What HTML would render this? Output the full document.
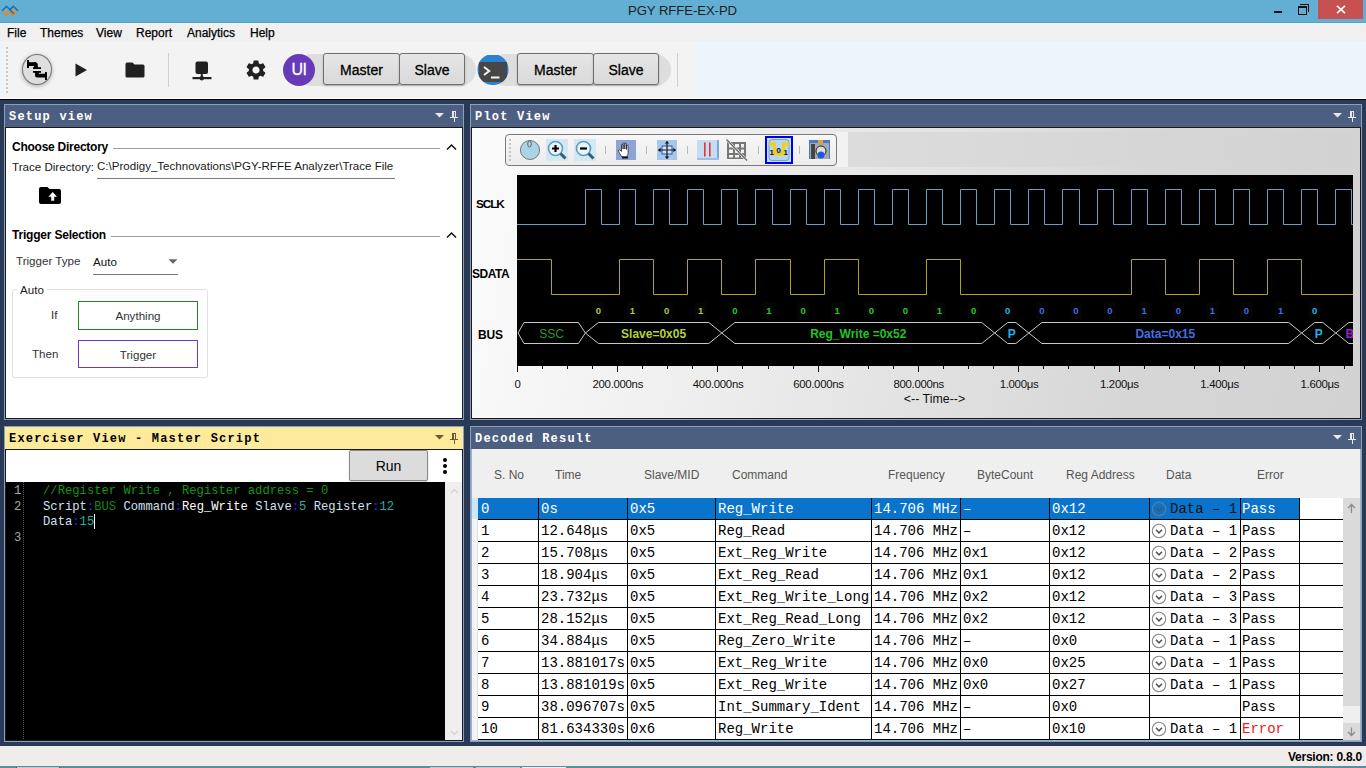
<!DOCTYPE html>
<html><head><meta charset="utf-8">
<style>
*{box-sizing:border-box;margin:0;padding:0}
html,body{width:1366px;height:768px;overflow:hidden;background:#293a57;font-family:"Liberation Sans",sans-serif;position:relative}
.a{position:absolute}
.mono{font-family:"Liberation Mono",monospace}
#title{left:0;top:0;width:1366px;height:23px;background:#62afd3;border-bottom:1px solid #5aa3c6}
#menu{left:0;top:23px;width:1366px;height:18px;background:#f0f0f0;font-size:12px;color:#000;-webkit-text-stroke:0.25px #000}
#menu span{position:absolute;top:3px}
#tb{left:0;top:41px;width:1366px;height:57px;background:#eef4fb}
#tbl{left:3px;top:41px;width:694px;height:57px;background:#f3f3f3}
#frame{left:0;top:98px;width:1366px;height:648px;background:#293a57;border-top:1px solid #fff}
.blk{left:0;top:99px;width:1366px;height:1px;background:#000}
.pn{position:absolute;border:1px solid #8e9ec0;background:#4d5f80}
.ph{position:absolute;left:0;top:0;right:0;height:22px;font:bold 12px "Liberation Mono",monospace;letter-spacing:1.2px;color:#fff;padding:5px 0 0 4px}
.pc{position:absolute;left:0;top:22px;right:0;bottom:0;border:1px solid #1a1a1a;background:#fff}
#status{left:0;top:746px;width:1366px;height:20px;background:#f0ecea}
.btn{border:1.5px solid #707070;border-radius:3px;background:linear-gradient(#e6e6e6,#d9d9d9);font-size:14px;color:#000;-webkit-text-stroke:0.3px #000;text-align:center;line-height:33px;box-shadow:0 1px 2px rgba(0,0,0,.25)}
.hd{font-size:12px;color:#555}
.cell{font:14px/18px "Liberation Mono",monospace;white-space:pre}
.code{font:12.2px/15px "Liberation Mono",monospace;white-space:pre}
#taskb{left:0;top:766px;width:1366px;height:2px;background:#5a8e9c}
</style></head><body>
<div id="title" class="a"></div>
<svg class="a" style="left:0;top:0" width="22" height="22" viewBox="0 0 22 22"><g fill="none" stroke-width="1.5" stroke-linecap="square"><path d="M2.6 11.2L6.5 15.1L13.4 8.2" stroke="#f5820f"/><path d="M10 12L13.3 15.1L17.4 11.2" stroke="#f5820f"/><path d="M2.6 10.2L6.5 6.3L13.4 13.2" stroke="#0a6fd8"/><path d="M10 9.6L13.3 6.3L17.4 10.2" stroke="#0a6fd8"/></g><path d="M5.5 10.5L6.5 9.3L7.5 10.5M12.3 10.5L13.3 9.3L14.3 10.5" fill="none" stroke="#f5900f" stroke-width="1.2"/></svg>
<div class="a" style="left:628px;top:3px;font-size:13.2px;color:#1e1e1e;letter-spacing:-0.1px">PGY RFFE-EX-PD</div>
<div class="a" style="left:1274px;top:11px;width:8px;height:2px;background:#111"></div>
<div class="a" style="left:1300px;top:4px;width:9px;height:8px;border-top:1.5px solid #111;border-right:1.5px solid #111"></div>
<div class="a" style="left:1298px;top:6px;width:9px;height:8.5px;border:1.5px solid #111;border-top-width:2px;background:#62afd3"></div>
<div class="a" style="left:1318px;top:0;width:45px;height:19px;background:#c75050"></div>
<svg class="a" style="left:1336px;top:5px" width="10" height="9" viewBox="0 0 10 9"><path d="M1 0.8L9 8.2M9 0.8L1 8.2" stroke="#fff" stroke-width="1.6"/></svg>
<div id="menu" class="a"><span style="left:7px">File</span><span style="left:40px">Themes</span><span style="left:96px">View</span><span style="left:136px">Report</span><span style="left:187px">Analytics</span><span style="left:250px">Help</span></div>
<div id="tb" class="a"></div>
<div id="tbl" class="a"></div>
<div class="a" style="left:6px;top:47px;width:2px;height:48px;background:repeating-linear-gradient(#c8c8c8 0 2px,transparent 2px 4px)"></div>
<!-- circle swap icon -->
<div class="a" style="left:22px;top:54px;width:30px;height:31px;border-radius:50%;background:#dedede;border:1.3px solid #747474;box-shadow:0 1px 4px rgba(0,0,0,.3)"></div>
<svg class="a" style="left:18px;top:50px" width="40" height="40" viewBox="0 0 40 40"><g fill="#000"><rect x="9" y="10" width="2" height="8"/><rect x="9" y="12.2" width="9" height="3.8"/><path d="M16 12.2h1.5a2.5 2.5 0 0 1 2.3 2.3V18h-3.8z"/><rect x="15" y="17.2" width="8" height="1.8"/><rect x="15" y="21" width="8" height="1.8"/><path d="M17 22h3.8v1.7h8v3.8H19.5a2.5 2.5 0 0 1-2.5-2.5z"/><rect x="27" y="22" width="1.9" height="8"/></g></svg>
<svg class="a" style="left:75px;top:63px" width="13" height="14" viewBox="0 0 13 14"><path d="M0.5 0.5L12 7L0.5 13.5Z" fill="#202020"/></svg>
<svg class="a" style="left:125px;top:62px" width="20" height="16" viewBox="0 0 20 16"><path d="M2 0.5h5.5l2 2H18a1.5 1.5 0 0 1 1.5 1.5v10a1.5 1.5 0 0 1-1.5 1.5H2A1.5 1.5 0 0 1 .5 14V2A1.5 1.5 0 0 1 2 .5z" fill="#202020"/></svg>
<div class="a" style="left:168px;top:53px;width:1px;height:34px;background:#cfcfcf"></div>
<svg class="a" style="left:192px;top:61px" width="20" height="20" viewBox="0 0 20 20"><rect x="3.5" y="0.5" width="12.5" height="12.5" rx="2" fill="#202020"/><rect x="8.8" y="12" width="2" height="5" fill="#202020"/><rect x="0.5" y="16" width="19" height="2.2" fill="#202020"/><circle cx="9.8" cy="17.2" r="2.2" fill="#202020"/></svg>
<svg class="a" style="left:244px;top:58px" width="24" height="24" viewBox="0 0 24 24"><path fill="#202020" d="M19.14 12.94c.04-.3.06-.61.06-.94 0-.32-.02-.64-.07-.94l2.03-1.58a.49.49 0 0 0 .12-.61l-1.92-3.32a.49.49 0 0 0-.59-.22l-2.39.96c-.5-.38-1.03-.7-1.62-.94l-.36-2.54a.48.48 0 0 0-.48-.41h-3.84c-.24 0-.43.17-.47.41l-.36 2.54c-.59.24-1.13.57-1.62.94l-2.39-.96a.48.48 0 0 0-.59.22L2.74 8.87c-.12.21-.08.47.12.61l2.03 1.58c-.05.3-.09.63-.09.94s.02.64.07.94l-2.03 1.58a.49.49 0 0 0-.12.61l1.92 3.32c.12.22.37.29.59.22l2.39-.96c.5.38 1.03.7 1.62.94l.36 2.54c.05.24.24.41.48.41h3.84c.24 0 .44-.17.47-.41l.36-2.54c.59-.24 1.13-.56 1.62-.94l2.39.96c.22.08.47 0 .59-.22l1.92-3.32c.12-.22.07-.47-.12-.61l-2.01-1.58zM12 15.6c-1.98 0-3.6-1.62-3.6-3.6s1.62-3.6 3.6-3.6 3.6 1.62 3.6 3.6-1.62 3.6-3.6 3.6z"/></svg>
<!-- toggle 1 -->
<div class="a" style="left:295px;top:54px;width:181px;height:32px;border-radius:16px;background:#dedede"></div>
<div class="a" style="left:283px;top:54px;width:32px;height:32px;border-radius:50%;background:#673ab7;color:#fff;font:16px 'Liberation Sans',sans-serif;-webkit-text-stroke:0.3px #fff;text-align:center;line-height:32px;letter-spacing:-0.5px">UI</div>
<div class="a btn" style="left:323px;top:53px;width:77px;height:32px">Master</div>
<div class="a btn" style="left:399px;top:53px;width:66px;height:32px">Slave</div>
<!-- toggle 2 -->
<div class="a" style="left:490px;top:54px;width:181px;height:32px;border-radius:16px;background:#dedede"></div>
<svg class="a" style="left:477px;top:55px" width="32" height="30" viewBox="0 0 32 30"><defs><clipPath id="cc"><circle cx="16" cy="14.5" r="15.5"/></clipPath></defs><g clip-path="url(#cc)"><rect width="32" height="30" fill="#2d7fd2"/><rect x="2" y="7" width="28" height="20" fill="#474747"/><path d="M7 12l5.2 4-5.2 4" fill="none" stroke="#f4f4f4" stroke-width="2"/><rect x="14" y="21.5" width="8.5" height="2" fill="#f4f4f4"/></g></svg>
<div class="a btn" style="left:517px;top:53px;width:77px;height:32px">Master</div>
<div class="a btn" style="left:593px;top:53px;width:66px;height:32px">Slave</div>
<div class="a" style="left:677px;top:53px;width:1px;height:34px;background:#cfcfcf"></div>
<div id="frame" class="a"></div>
<div class="a blk"></div>

<!-- Setup view -->
<div class="pn" style="left:4px;top:104px;width:460px;height:316px">
  <div class="ph">Setup view</div>
  <div class="pc"></div>
</div>
<div class="a" style="left:12px;top:140px;font-weight:bold;font-size:12px;letter-spacing:-0.25px;color:#000">Choose Directory</div>
<div class="a" style="left:113px;top:148px;width:327px;height:1px;background:#a0a0a0"></div>
<svg class="a" style="left:446px;top:143px" width="11" height="8" viewBox="0 0 11 8"><path d="M1 6.5L5.5 2 10 6.5" fill="none" stroke="#111" stroke-width="1.5"/></svg>
<div class="a" style="left:12px;top:160px;font-size:11.6px;color:#1a1a1a">Trace Directory:</div>
<div class="a" style="left:97px;top:160px;font-size:11.55px;color:#1a1a1a;letter-spacing:0px">C:\Prodigy_Technovations\PGY-RFFE Analyzer\Trace File</div>
<div class="a" style="left:97px;top:178px;width:298px;height:1px;background:#7a7a7a"></div>
<svg class="a" style="left:39px;top:187px" width="22" height="17" viewBox="0 0 22 17"><path d="M2 0h6.5l2 2H20a2 2 0 0 1 2 2v11a2 2 0 0 1-2 2H2a2 2 0 0 1-2-2V2a2 2 0 0 1 2-2z" fill="#000"/><path d="M13.7 5L18 9.8h-2.8v4H12.2v-4H9.4z" fill="#fff"/></svg>
<div class="a" style="left:12px;top:228px;font-weight:bold;font-size:12px;letter-spacing:-0.2px;color:#000">Trigger Selection</div>
<div class="a" style="left:111px;top:236px;width:329px;height:1px;background:#a0a0a0"></div>
<svg class="a" style="left:446px;top:231px" width="11" height="8" viewBox="0 0 11 8"><path d="M1 6.5L5.5 2 10 6.5" fill="none" stroke="#111" stroke-width="1.5"/></svg>
<div class="a" style="left:16px;top:254px;font-size:11.6px;color:#333">Trigger Type</div>
<div class="a" style="left:93px;top:255px;font-size:11.6px;color:#111">Auto</div>
<svg class="a" style="left:168px;top:259px" width="10" height="5" viewBox="0 0 10 5"><path d="M0.5 0.3h9L5 4.8z" fill="#666"/></svg>
<div class="a" style="left:93px;top:274px;width:85px;height:1px;background:#777"></div>
<div class="a" style="left:12px;top:289px;width:196px;height:89px;border:1px solid #e1e1e1;border-radius:3px"></div>
<div class="a" style="left:17px;top:283px;background:#fff;padding:0 3px;font-size:11.6px;color:#222">Auto</div>
<div class="a" style="left:51px;top:308px;font-size:11.6px;color:#333">If</div>
<div class="a" style="left:78px;top:301px;width:120px;height:29px;border:1.5px solid #1f8a1f;font-size:11.6px;color:#333;text-align:center;line-height:27px">Anything</div>
<div class="a" style="left:32px;top:347px;font-size:11.6px;color:#333">Then</div>
<div class="a" style="left:78px;top:340px;width:120px;height:28px;border:1.5px solid #6e3bc4;font-size:11.6px;color:#333;text-align:center;line-height:27px">Trigger</div>
<!-- Plot view -->
<div class="pn" style="left:470px;top:104px;width:892px;height:316px">
  <div class="ph">Plot View</div>
  <div class="pc" style="background:linear-gradient(100deg,#fbfbfb 0%,#f0f0f0 25%,#d6d6d6 75%,#d2d2d2 100%)"></div>
</div>
<div class="a" style="left:848px;top:132px;width:504px;height:35px;background:linear-gradient(90deg,#dcdcdc,#d2d2d2)"></div>
<div class="a" style="left:836px;top:132px;width:12px;height:35px;background:#f2f2f2"></div>
<div class="a" style="left:505px;top:134px;width:332px;height:32px;border:1px solid #7a7a7a;border-radius:4px;background:linear-gradient(#f7f7f7,#ececec)"></div>
<div class="a" style="left:509px;top:139px;width:2px;height:22px;background:repeating-linear-gradient(#c4c4c4 0 2px,transparent 2px 4px)"></div>
<svg class="a" style="left:519px;top:139px" width="22" height="22" viewBox="0 0 22 22"><ellipse cx="11" cy="11" rx="9.6" ry="9.5" fill="#a9d4e6" stroke="#777" stroke-width="1"/><ellipse cx="10.5" cy="5" rx="1.8" ry="3.2" fill="none" stroke="#666" stroke-width="1"/></svg>
<svg class="a" style="left:546px;top:139px" width="22" height="22" viewBox="0 0 22 22"><rect width="22" height="22" fill="#d4e8f2"/><circle cx="9.5" cy="9.5" r="7" fill="#eaf4fa" stroke="#5a9cc4" stroke-width="1.6"/><path d="M14.5 14.5l5 5" stroke="#2f5f7a" stroke-width="3"/><path d="M9.5 6v7M6 9.5h7" stroke="#000" stroke-width="2.2"/></svg>
<svg class="a" style="left:574px;top:139px" width="22" height="22" viewBox="0 0 22 22"><rect width="22" height="22" fill="#d4e8f2"/><circle cx="9.5" cy="9.5" r="7" fill="#eaf4fa" stroke="#5a9cc4" stroke-width="1.6"/><path d="M14.5 14.5l5 5" stroke="#2f5f7a" stroke-width="3"/><path d="M6 9.5h7" stroke="#000" stroke-width="2.2"/></svg>
<div class="a" style="left:605px;top:146px;width:1px;height:8px;background:#b8b8b8"></div>
<svg class="a" style="left:616px;top:140px" width="20" height="20" viewBox="0 0 20 20"><rect width="20" height="20" fill="#8ea4d6"/><path d="M6 17c-2-3-4-6-3.5-7 .6-1 2 .5 3 1.5V5c0-1 1.6-1 1.6 0v4V3.5c0-1 1.7-1 1.7 0V9V4c0-1 1.7-1 1.7 0v5.5V6c0-1 1.6-1 1.6 0v7c0 2-1 3-2 4z" fill="#fff" stroke="#222" stroke-width="0.8"/><rect x="6" y="16.5" width="6" height="2" fill="#111"/></svg>
<div class="a" style="left:646px;top:146px;width:1px;height:8px;background:#b8b8b8"></div>
<svg class="a" style="left:657px;top:140px" width="20" height="20" viewBox="0 0 20 20"><rect width="20" height="20" fill="#a6c6ee"/><rect x="5" y="6" width="10" height="8" fill="#cfe2fa" stroke="#2a5aa0" stroke-width="1"/><path d="M10 1.5v17M1.5 10h17" stroke="#1a1a1a" stroke-width="1.2"/><path d="M10 1l-2.2 2.6h4.4zM10 19l-2.2-2.6h4.4zM1 10l2.6-2.2v4.4zM19 10l-2.6-2.2v4.4z" fill="#111"/></svg>
<div class="a" style="left:687px;top:146px;width:1px;height:8px;background:#b8b8b8"></div>
<svg class="a" style="left:697px;top:140px" width="22" height="20" viewBox="0 0 22 20"><rect width="22" height="20" fill="#c6dcf0"/><rect x="20" y="0" width="2" height="20" fill="#7aa8d8"/><rect x="0" y="18" width="22" height="2" fill="#9cbfe2"/><rect x="7" y="2.5" width="1.6" height="14" fill="#e03838"/><rect x="12" y="2.5" width="1.6" height="14" fill="#e03838"/></svg>
<svg class="a" style="left:726px;top:139px" width="22" height="22" viewBox="0 0 22 22"><g fill="#777"><rect x="1" y="3" width="19" height="17"/></g><g fill="#f2f2f2"><rect x="3" y="5" width="4" height="3.5"/><rect x="9" y="5" width="4" height="3.5"/><rect x="15" y="5" width="3" height="3.5"/><rect x="3" y="10.5" width="4" height="3.5"/><rect x="9" y="10.5" width="4" height="3.5"/><rect x="15" y="10.5" width="3" height="3.5"/><rect x="3" y="16" width="4" height="2.5"/><rect x="9" y="16" width="4" height="2.5"/><rect x="15" y="16" width="3" height="2.5"/></g><path d="M0.5 0.5L21 21.5" stroke="#f2f2f2" stroke-width="2.4"/><path d="M0.5 0.5L21 21.5" stroke="#666" stroke-width="1.2"/></svg>
<div class="a" style="left:758px;top:146px;width:1px;height:8px;background:#b8b8b8"></div>
<svg class="a" style="left:765px;top:136px" width="28" height="28" viewBox="0 0 28 28"><rect x="1" y="1" width="26" height="26" fill="#c4e0f6" stroke="#0000f0" stroke-width="2"/><rect x="4" y="3.5" width="20" height="21" rx="3" fill="#b6d6f2" stroke="#6890c0" stroke-width="0.8"/><path d="M4 8h5.5v10h9V8H24" fill="none" stroke="#f8d000" stroke-width="2.8"/><text x="4.5" y="19" font-family="Liberation Sans" font-weight="bold" font-size="8" fill="#111">1</text><text x="11.5" y="17" font-family="Liberation Sans" font-weight="bold" font-size="8" fill="#111">0</text><text x="18.5" y="19" font-family="Liberation Sans" font-weight="bold" font-size="8" fill="#111">1</text></svg>
<div class="a" style="left:799px;top:146px;width:1px;height:8px;background:#b8b8b8"></div>
<svg class="a" style="left:809px;top:140px" width="21" height="19" viewBox="0 0 21 19"><rect width="21" height="19" fill="#4a7ad0"/><rect x="1" y="3" width="19" height="16" fill="#a8a8a8"/><rect x="2" y="4" width="4" height="15" fill="#444"/><rect x="9" y="0" width="5" height="3" fill="#f0a020"/><circle cx="12" cy="11" r="5" fill="#ddd" stroke="#222" stroke-width="1"/><circle cx="12" cy="15" r="3.5" fill="#1a5ae0"/></svg>

<div class="a" style="left:476px;top:197px;font-weight:bold;font-size:11.8px;color:#000;letter-spacing:-1.1px">SCLK</div>
<div class="a" style="left:472px;top:267px;font-weight:bold;font-size:12px;color:#000;letter-spacing:-0.5px">SDATA</div>
<div class="a" style="left:478px;top:328px;font-weight:bold;font-size:12px;color:#000;letter-spacing:-0.2px">BUS</div>
<svg class="a" style="left:0;top:0" width="1366" height="420" viewBox="0 0 1366 420">
<rect x="517" y="175" width="836" height="191" fill="#000"/>
<path d="M517 224.5 H585.5 V189.5 H601.5 V224.5 H619.5 V189.5 H635.5 V224.5 H653.5 V189.5 H669.5 V224.5 H687.5 V189.5 H703.5 V224.5 H721.5 V189.5 H737.5 V224.5 H755.5 V189.5 H772.5 V224.5 H790.5 V189.5 H806.5 V224.5 H824.5 V189.5 H840.5 V224.5 H858.5 V189.5 H874.5 V224.5 H892.5 V189.5 H908.5 V224.5 H926.5 V189.5 H942.5 V224.5 H960.5 V189.5 H976.5 V224.5 H994.5 V189.5 H1010.5 V224.5 H1028.5 V189.5 H1044.5 V224.5 H1062.5 V189.5 H1079.5 V224.5 H1097.5 V189.5 H1113.5 V224.5 H1131.5 V189.5 H1147.5 V224.5 H1165.5 V189.5 H1181.5 V224.5 H1199.5 V189.5 H1215.5 V224.5 H1233.5 V189.5 H1249.5 V224.5 H1267.5 V189.5 H1283.5 V224.5 H1301.5 V189.5 H1317.5 V224.5 H1335.5 V189.5 H1351.5 V224.5 H1353" fill="none" stroke="#64a2c2" stroke-width="1"/>
<path d="M517 259.5 H551.5 V294.5 H619.5 V259.5 H653.5 V294.5 H687.5 V259.5 H721.5 V294.5 H755.5 V259.5 H790.5 V294.5 H824.5 V259.5 H858.5 V294.5 H926.5 V259.5 H960.5 V294.5 H1131.5 V259.5 H1165.5 V294.5 H1199.5 V259.5 H1233.5 V294.5 H1267.5 V259.5 H1301.5 V294.5 H1353" fill="none" stroke="#b0a224" stroke-width="1"/>
<rect x="592.4" y="302" width="12" height="17" fill="#050505"/>
<text x="598.4" y="314" fill="#a8cc34" font-family="Liberation Sans" font-weight="bold" font-size="9.5" text-anchor="middle">0</text>
<rect x="626.5" y="302" width="12" height="17" fill="#050505"/>
<text x="632.5" y="314" fill="#a8cc34" font-family="Liberation Sans" font-weight="bold" font-size="9.5" text-anchor="middle">1</text>
<rect x="660.6" y="302" width="12" height="17" fill="#050505"/>
<text x="666.6" y="314" fill="#a8cc34" font-family="Liberation Sans" font-weight="bold" font-size="9.5" text-anchor="middle">0</text>
<rect x="694.7" y="302" width="12" height="17" fill="#050505"/>
<text x="700.7" y="314" fill="#a8cc34" font-family="Liberation Sans" font-weight="bold" font-size="9.5" text-anchor="middle">1</text>
<rect x="728.8" y="302" width="12" height="17" fill="#050505"/>
<text x="734.8" y="314" fill="#28c828" font-family="Liberation Sans" font-weight="bold" font-size="9.5" text-anchor="middle">0</text>
<rect x="763.0" y="302" width="12" height="17" fill="#050505"/>
<text x="769.0" y="314" fill="#28c828" font-family="Liberation Sans" font-weight="bold" font-size="9.5" text-anchor="middle">1</text>
<rect x="797.1" y="302" width="12" height="17" fill="#050505"/>
<text x="803.1" y="314" fill="#28c828" font-family="Liberation Sans" font-weight="bold" font-size="9.5" text-anchor="middle">0</text>
<rect x="831.2" y="302" width="12" height="17" fill="#050505"/>
<text x="837.2" y="314" fill="#28c828" font-family="Liberation Sans" font-weight="bold" font-size="9.5" text-anchor="middle">1</text>
<rect x="865.3" y="302" width="12" height="17" fill="#050505"/>
<text x="871.3" y="314" fill="#28c828" font-family="Liberation Sans" font-weight="bold" font-size="9.5" text-anchor="middle">0</text>
<rect x="899.4" y="302" width="12" height="17" fill="#050505"/>
<text x="905.4" y="314" fill="#28c828" font-family="Liberation Sans" font-weight="bold" font-size="9.5" text-anchor="middle">0</text>
<rect x="933.5" y="302" width="12" height="17" fill="#050505"/>
<text x="939.5" y="314" fill="#28c828" font-family="Liberation Sans" font-weight="bold" font-size="9.5" text-anchor="middle">1</text>
<rect x="967.6" y="302" width="12" height="17" fill="#050505"/>
<text x="973.6" y="314" fill="#28c828" font-family="Liberation Sans" font-weight="bold" font-size="9.5" text-anchor="middle">0</text>
<rect x="1001.7" y="302" width="12" height="17" fill="#050505"/>
<text x="1007.7" y="314" fill="#22b8e8" font-family="Liberation Sans" font-weight="bold" font-size="9.5" text-anchor="middle">0</text>
<rect x="1035.8" y="302" width="12" height="17" fill="#050505"/>
<text x="1041.8" y="314" fill="#3f6fe0" font-family="Liberation Sans" font-weight="bold" font-size="9.5" text-anchor="middle">0</text>
<rect x="1069.9" y="302" width="12" height="17" fill="#050505"/>
<text x="1075.9" y="314" fill="#3f6fe0" font-family="Liberation Sans" font-weight="bold" font-size="9.5" text-anchor="middle">0</text>
<rect x="1104.0" y="302" width="12" height="17" fill="#050505"/>
<text x="1110.0" y="314" fill="#3f6fe0" font-family="Liberation Sans" font-weight="bold" font-size="9.5" text-anchor="middle">0</text>
<rect x="1138.2" y="302" width="12" height="17" fill="#050505"/>
<text x="1144.2" y="314" fill="#3f6fe0" font-family="Liberation Sans" font-weight="bold" font-size="9.5" text-anchor="middle">1</text>
<rect x="1172.3" y="302" width="12" height="17" fill="#050505"/>
<text x="1178.3" y="314" fill="#3f6fe0" font-family="Liberation Sans" font-weight="bold" font-size="9.5" text-anchor="middle">0</text>
<rect x="1206.4" y="302" width="12" height="17" fill="#050505"/>
<text x="1212.4" y="314" fill="#3f6fe0" font-family="Liberation Sans" font-weight="bold" font-size="9.5" text-anchor="middle">1</text>
<rect x="1240.5" y="302" width="12" height="17" fill="#050505"/>
<text x="1246.5" y="314" fill="#3f6fe0" font-family="Liberation Sans" font-weight="bold" font-size="9.5" text-anchor="middle">0</text>
<rect x="1274.6" y="302" width="12" height="17" fill="#050505"/>
<text x="1280.6" y="314" fill="#3f6fe0" font-family="Liberation Sans" font-weight="bold" font-size="9.5" text-anchor="middle">1</text>
<rect x="1308.7" y="302" width="12" height="17" fill="#050505"/>
<text x="1314.7" y="314" fill="#22b8e8" font-family="Liberation Sans" font-weight="bold" font-size="9.5" text-anchor="middle">0</text>
<defs><clipPath id="pc"><rect x="517" y="175" width="836" height="191"/></clipPath></defs><g clip-path="url(#pc)">
<path d="M518.0 333.0 L524.0 322.5 H578.4 L585.4 333.0 L578.4 343.5 H524.0 Z" fill="none" stroke="#c8c8c8" stroke-width="1"/>
<text x="551.7" y="338" fill="#2c9a2c" font-family="Liberation Sans" font-weight="normal" font-size="12" text-anchor="middle">SSC</text>
<path d="M585.4 333.0 L598.4 322.5 H708.8 L721.8 333.0 L708.8 343.5 H598.4 Z" fill="none" stroke="#c8c8c8" stroke-width="1"/>
<text x="653.6" y="338" fill="#b4d234" font-family="Liberation Sans" font-weight="bold" font-size="12" text-anchor="middle">Slave=0x05</text>
<path d="M721.8 333.0 L734.8 322.5 H981.7 L994.7 333.0 L981.7 343.5 H734.8 Z" fill="none" stroke="#c8c8c8" stroke-width="1"/>
<text x="858.3" y="338" fill="#22c422" font-family="Liberation Sans" font-weight="bold" font-size="12" text-anchor="middle">Reg_Write =0x52</text>
<path d="M994.7 333.0 L1007.7 322.5 H1015.8 L1028.8 333.0 L1015.8 343.5 H1007.7 Z" fill="none" stroke="#c8c8c8" stroke-width="1"/>
<text x="1011.8" y="338" fill="#22b0f0" font-family="Liberation Sans" font-weight="bold" font-size="12" text-anchor="middle">P</text>
<path d="M1028.8 333.0 L1041.8 322.5 H1288.7 L1301.7 333.0 L1288.7 343.5 H1041.8 Z" fill="none" stroke="#c8c8c8" stroke-width="1"/>
<text x="1165.3" y="338" fill="#4070e0" font-family="Liberation Sans" font-weight="bold" font-size="12" text-anchor="middle">Data=0x15</text>
<path d="M1301.7 333.0 L1314.7 322.5 H1322.8 L1335.8 333.0 L1322.8 343.5 H1314.7 Z" fill="none" stroke="#c8c8c8" stroke-width="1"/>
<text x="1318.8" y="338" fill="#22b0f0" font-family="Liberation Sans" font-weight="bold" font-size="12" text-anchor="middle">P</text>
<path d="M1335.8 333.0 L1348.8 322.5 H1382.8 L1395.8 333.0 L1382.8 343.5 H1348.8 Z" fill="none" stroke="#c8c8c8" stroke-width="1"/>
<text x="1349.8" y="338" fill="#a020c0" font-family="Liberation Sans" font-weight="bold" font-size="12" text-anchor="middle">B</text>
</g>
<rect x="517" y="366" width="1" height="6" fill="#111"/>
<rect x="542" y="366" width="1" height="3" fill="#111"/>
<rect x="567" y="366" width="1" height="3" fill="#111"/>
<rect x="592" y="366" width="1" height="3" fill="#111"/>
<rect x="617" y="366" width="1" height="6" fill="#111"/>
<rect x="642" y="366" width="1" height="3" fill="#111"/>
<rect x="667" y="366" width="1" height="3" fill="#111"/>
<rect x="692" y="366" width="1" height="3" fill="#111"/>
<rect x="717" y="366" width="1" height="6" fill="#111"/>
<rect x="742" y="366" width="1" height="3" fill="#111"/>
<rect x="768" y="366" width="1" height="3" fill="#111"/>
<rect x="793" y="366" width="1" height="3" fill="#111"/>
<rect x="818" y="366" width="1" height="6" fill="#111"/>
<rect x="843" y="366" width="1" height="3" fill="#111"/>
<rect x="868" y="366" width="1" height="3" fill="#111"/>
<rect x="893" y="366" width="1" height="3" fill="#111"/>
<rect x="918" y="366" width="1" height="6" fill="#111"/>
<rect x="943" y="366" width="1" height="3" fill="#111"/>
<rect x="968" y="366" width="1" height="3" fill="#111"/>
<rect x="993" y="366" width="1" height="3" fill="#111"/>
<rect x="1018" y="366" width="1" height="6" fill="#111"/>
<rect x="1043" y="366" width="1" height="3" fill="#111"/>
<rect x="1068" y="366" width="1" height="3" fill="#111"/>
<rect x="1094" y="366" width="1" height="3" fill="#111"/>
<rect x="1119" y="366" width="1" height="6" fill="#111"/>
<rect x="1144" y="366" width="1" height="3" fill="#111"/>
<rect x="1169" y="366" width="1" height="3" fill="#111"/>
<rect x="1194" y="366" width="1" height="3" fill="#111"/>
<rect x="1219" y="366" width="1" height="6" fill="#111"/>
<rect x="1244" y="366" width="1" height="3" fill="#111"/>
<rect x="1269" y="366" width="1" height="3" fill="#111"/>
<rect x="1294" y="366" width="1" height="3" fill="#111"/>
<rect x="1319" y="366" width="1" height="6" fill="#111"/>
<rect x="1344" y="366" width="1" height="3" fill="#111"/>
<text x="517.5" y="388" fill="#111" font-family="Liberation Sans" font-size="11.4" text-anchor="middle" letter-spacing="-0.3">0</text>
<text x="617.8" y="388" fill="#111" font-family="Liberation Sans" font-size="11.4" text-anchor="middle" letter-spacing="-0.3">200.000ns</text>
<text x="718.1" y="388" fill="#111" font-family="Liberation Sans" font-size="11.4" text-anchor="middle" letter-spacing="-0.3">400.000ns</text>
<text x="818.4" y="388" fill="#111" font-family="Liberation Sans" font-size="11.4" text-anchor="middle" letter-spacing="-0.3">600.000ns</text>
<text x="918.7" y="388" fill="#111" font-family="Liberation Sans" font-size="11.4" text-anchor="middle" letter-spacing="-0.3">800.000ns</text>
<text x="1019.0" y="388" fill="#111" font-family="Liberation Sans" font-size="11.4" text-anchor="middle" letter-spacing="-0.3">1.000μs</text>
<text x="1119.3" y="388" fill="#111" font-family="Liberation Sans" font-size="11.4" text-anchor="middle" letter-spacing="-0.3">1.200μs</text>
<text x="1219.6" y="388" fill="#111" font-family="Liberation Sans" font-size="11.4" text-anchor="middle" letter-spacing="-0.3">1.400μs</text>
<text x="1319.9" y="388" fill="#111" font-family="Liberation Sans" font-size="11.4" text-anchor="middle" letter-spacing="-0.3">1.600μs</text>
<text x="934.5" y="403" fill="#111" font-family="Liberation Sans" font-size="12.4" text-anchor="middle">&lt;-- Time--&gt;</text>
</svg>
<!-- Exerciser -->
<div class="pn" style="left:4px;top:426px;width:460px;height:316px;background:#fdeb9b">
  <div class="ph" style="color:#000">Exerciser View - Master Script</div>
  <div class="pc" style="background:#000"></div>
</div>
<div class="a" style="left:6px;top:450px;width:456px;height:32px;background:#fff"></div>
<div class="a" style="left:349px;top:450px;width:79px;height:31px;border:1px solid #8a8a8a;border-radius:2px;background:#dcdcdc;box-shadow:0 1px 2px rgba(0,0,0,.2);font-size:14px;color:#000;text-align:center;line-height:30px">Run</div>
<div class="a" style="left:443px;top:458px;width:4px;height:4px;border-radius:50%;background:#000"></div>
<div class="a" style="left:443px;top:464px;width:4px;height:4px;border-radius:50%;background:#000"></div>
<div class="a" style="left:443px;top:470px;width:4px;height:4px;border-radius:50%;background:#000"></div>
<div class="a" style="left:6px;top:482px;width:439px;height:258px;background:#000"></div>
<div class="a" style="left:445px;top:482px;width:17px;height:258px;background:#efefef"></div>
<svg class="a" style="left:450px;top:488px" width="9" height="6" viewBox="0 0 9 6"><path d="M1 5l3.5-3.5L8 5" fill="none" stroke="#cfcfcf" stroke-width="1.1"/></svg>
<svg class="a" style="left:450px;top:730px" width="9" height="6" viewBox="0 0 9 6"><path d="M1 1l3.5 3.5L8 1" fill="none" stroke="#cfcfcf" stroke-width="1.1"/></svg>
<div class="a" style="left:23px;top:482px;width:1px;height:258px;background:repeating-linear-gradient(#5a5a5a 0 1px,transparent 1px 2px)"></div>
<div class="a code" style="left:14px;top:484px;color:#a8a8a8">1</div>
<div class="a code" style="left:14px;top:499.5px;color:#a8a8a8">2</div>
<div class="a code" style="left:14px;top:530.5px;color:#a8a8a8">3</div>
<div class="a code" style="left:43px;top:484px;color:#139413">//Register Write , Register address = 0</div>
<div class="a code" style="left:43px;top:499.5px;color:#d0e0f0">Script<span style="color:#2424ff">:</span><span style="color:#0e8a0e">BUS</span> Command<span style="color:#2424ff">:</span><span style="color:#fff">Reg_Write</span> Slave<span style="color:#2424ff">:</span><span style="color:#20b0a8">5</span> Register<span style="color:#2424ff">:</span><span style="color:#20b0a8">12</span></div>
<div class="a code" style="left:43px;top:515px;color:#d0e0f0">Data<span style="color:#2424ff">:</span><span style="color:#20b0a8">15</span></div>
<div class="a" style="left:94px;top:514px;width:1px;height:15px;background:#fff"></div>

<!-- Decoded -->
<div class="pn" style="left:470px;top:426px;width:892px;height:316px">
  <div class="ph">Decoded Result</div>
  <div class="pc" style="background:#f0f0f0;border-color:#9fb0cc"></div>
</div>
<div class="a" style="left:472px;top:449px;width:888px;height:49px;background:#efefef"></div>
<div class="a hd" style="left:494px;top:468px">S. No</div>
<div class="a hd" style="left:555px;top:468px">Time</div>
<div class="a hd" style="left:644px;top:468px">Slave/MID</div>
<div class="a hd" style="left:732px;top:468px">Command</div>
<div class="a hd" style="left:888px;top:468px">Frequency</div>
<div class="a hd" style="left:977px;top:468px">ByteCount</div>
<div class="a hd" style="left:1066px;top:468px">Reg Address</div>
<div class="a hd" style="left:1166px;top:468px">Data</div>
<div class="a hd" style="left:1257px;top:468px">Error</div>
<div class="a" style="left:472px;top:498px;width:6px;height:242px;background:#f4f4f4;border-right:1px solid #e0e0e0"></div>
<div class="a" style="left:472px;top:498px;width:6px;height:21px;background:#cfe6f8"></div>
<div class="a" style="left:478px;top:498px;width:865px;height:242px;background:#fff"></div>
<div class="a" style="left:478px;top:498px;width:821px;height:21px;background:#0a74cc"></div>
<div class="a" style="left:478px;top:519px;width:865px;height:1px;background:#000"></div>
<div class="a" style="left:478px;top:541px;width:865px;height:1px;background:#000"></div>
<div class="a" style="left:478px;top:563px;width:865px;height:1px;background:#000"></div>
<div class="a" style="left:478px;top:585px;width:865px;height:1px;background:#000"></div>
<div class="a" style="left:478px;top:607px;width:865px;height:1px;background:#000"></div>
<div class="a" style="left:478px;top:629px;width:865px;height:1px;background:#000"></div>
<div class="a" style="left:478px;top:651px;width:865px;height:1px;background:#000"></div>
<div class="a" style="left:478px;top:673px;width:865px;height:1px;background:#000"></div>
<div class="a" style="left:478px;top:695px;width:865px;height:1px;background:#000"></div>
<div class="a" style="left:478px;top:717px;width:865px;height:1px;background:#000"></div>
<div class="a" style="left:478px;top:739px;width:865px;height:1px;background:#000"></div>
<div class="a" style="left:538px;top:498px;width:1px;height:242px;background:#000"></div>
<div class="a" style="left:627px;top:498px;width:1px;height:242px;background:#000"></div>
<div class="a" style="left:715px;top:498px;width:1px;height:242px;background:#000"></div>
<div class="a" style="left:871px;top:498px;width:1px;height:242px;background:#000"></div>
<div class="a" style="left:960px;top:498px;width:1px;height:242px;background:#000"></div>
<div class="a" style="left:1049px;top:498px;width:1px;height:242px;background:#000"></div>
<div class="a" style="left:1149px;top:498px;width:1px;height:242px;background:#000"></div>
<div class="a" style="left:1240px;top:498px;width:1px;height:242px;background:#000"></div>
<div class="a" style="left:1299px;top:498px;width:1px;height:242px;background:#000"></div>
<div class="a cell" style="left:481px;top:500px;color:#fff">0</div>
<div class="a cell" style="left:541px;top:500px;color:#fff">0s</div>
<div class="a cell" style="left:630px;top:500px;color:#fff">0x5</div>
<div class="a cell" style="left:718px;top:500px;color:#fff">Reg_Write</div>
<div class="a cell" style="left:874px;top:500px;color:#fff">14.706 MHz</div>
<div class="a cell" style="left:963px;top:500px;color:#fff">–</div>
<div class="a cell" style="left:1052px;top:500px;color:#fff">0x12</div>
<svg class="a" style="left:1151px;top:501px" width="16" height="16" viewBox="0 0 16 16"><circle cx="8" cy="8" r="6.7" fill="none" stroke="#6a7a8a" stroke-width="1.1"/><path d="M5 6.8l3 3 3-3" fill="none" stroke="#4a5560" stroke-width="1.6"/></svg>
<div class="a cell" style="left:1170px;top:500px;color:#111">Data – 1</div>
<div class="a cell" style="left:1242px;top:500px;color:#fff">Pass</div>
<div class="a cell" style="left:481px;top:522px;color:#000">1</div>
<div class="a cell" style="left:541px;top:522px;color:#000">12.648μs</div>
<div class="a cell" style="left:630px;top:522px;color:#000">0x5</div>
<div class="a cell" style="left:718px;top:522px;color:#000">Reg_Read</div>
<div class="a cell" style="left:874px;top:522px;color:#000">14.706 MHz</div>
<div class="a cell" style="left:963px;top:522px;color:#000">–</div>
<div class="a cell" style="left:1052px;top:522px;color:#000">0x12</div>
<svg class="a" style="left:1151px;top:523px" width="16" height="16" viewBox="0 0 16 16"><circle cx="8" cy="8" r="6.7" fill="none" stroke="#8a8a8a" stroke-width="1.1"/><path d="M5 6.8l3 3 3-3" fill="none" stroke="#555" stroke-width="1.6"/></svg>
<div class="a cell" style="left:1170px;top:522px;color:#000">Data – 1</div>
<div class="a cell" style="left:1242px;top:522px;color:#000">Pass</div>
<div class="a cell" style="left:481px;top:544px;color:#000">2</div>
<div class="a cell" style="left:541px;top:544px;color:#000">15.708μs</div>
<div class="a cell" style="left:630px;top:544px;color:#000">0x5</div>
<div class="a cell" style="left:718px;top:544px;color:#000">Ext_Reg_Write</div>
<div class="a cell" style="left:874px;top:544px;color:#000">14.706 MHz</div>
<div class="a cell" style="left:963px;top:544px;color:#000">0x1</div>
<div class="a cell" style="left:1052px;top:544px;color:#000">0x12</div>
<svg class="a" style="left:1151px;top:545px" width="16" height="16" viewBox="0 0 16 16"><circle cx="8" cy="8" r="6.7" fill="none" stroke="#8a8a8a" stroke-width="1.1"/><path d="M5 6.8l3 3 3-3" fill="none" stroke="#555" stroke-width="1.6"/></svg>
<div class="a cell" style="left:1170px;top:544px;color:#000">Data – 2</div>
<div class="a cell" style="left:1242px;top:544px;color:#000">Pass</div>
<div class="a cell" style="left:481px;top:566px;color:#000">3</div>
<div class="a cell" style="left:541px;top:566px;color:#000">18.904μs</div>
<div class="a cell" style="left:630px;top:566px;color:#000">0x5</div>
<div class="a cell" style="left:718px;top:566px;color:#000">Ext_Reg_Read</div>
<div class="a cell" style="left:874px;top:566px;color:#000">14.706 MHz</div>
<div class="a cell" style="left:963px;top:566px;color:#000">0x1</div>
<div class="a cell" style="left:1052px;top:566px;color:#000">0x12</div>
<svg class="a" style="left:1151px;top:567px" width="16" height="16" viewBox="0 0 16 16"><circle cx="8" cy="8" r="6.7" fill="none" stroke="#8a8a8a" stroke-width="1.1"/><path d="M5 6.8l3 3 3-3" fill="none" stroke="#555" stroke-width="1.6"/></svg>
<div class="a cell" style="left:1170px;top:566px;color:#000">Data – 2</div>
<div class="a cell" style="left:1242px;top:566px;color:#000">Pass</div>
<div class="a cell" style="left:481px;top:588px;color:#000">4</div>
<div class="a cell" style="left:541px;top:588px;color:#000">23.732μs</div>
<div class="a cell" style="left:630px;top:588px;color:#000">0x5</div>
<div class="a cell" style="left:718px;top:588px;color:#000">Ext_Reg_Write_Long</div>
<div class="a cell" style="left:874px;top:588px;color:#000">14.706 MHz</div>
<div class="a cell" style="left:963px;top:588px;color:#000">0x2</div>
<div class="a cell" style="left:1052px;top:588px;color:#000">0x12</div>
<svg class="a" style="left:1151px;top:589px" width="16" height="16" viewBox="0 0 16 16"><circle cx="8" cy="8" r="6.7" fill="none" stroke="#8a8a8a" stroke-width="1.1"/><path d="M5 6.8l3 3 3-3" fill="none" stroke="#555" stroke-width="1.6"/></svg>
<div class="a cell" style="left:1170px;top:588px;color:#000">Data – 3</div>
<div class="a cell" style="left:1242px;top:588px;color:#000">Pass</div>
<div class="a cell" style="left:481px;top:610px;color:#000">5</div>
<div class="a cell" style="left:541px;top:610px;color:#000">28.152μs</div>
<div class="a cell" style="left:630px;top:610px;color:#000">0x5</div>
<div class="a cell" style="left:718px;top:610px;color:#000">Ext_Reg_Read_Long</div>
<div class="a cell" style="left:874px;top:610px;color:#000">14.706 MHz</div>
<div class="a cell" style="left:963px;top:610px;color:#000">0x2</div>
<div class="a cell" style="left:1052px;top:610px;color:#000">0x12</div>
<svg class="a" style="left:1151px;top:611px" width="16" height="16" viewBox="0 0 16 16"><circle cx="8" cy="8" r="6.7" fill="none" stroke="#8a8a8a" stroke-width="1.1"/><path d="M5 6.8l3 3 3-3" fill="none" stroke="#555" stroke-width="1.6"/></svg>
<div class="a cell" style="left:1170px;top:610px;color:#000">Data – 3</div>
<div class="a cell" style="left:1242px;top:610px;color:#000">Pass</div>
<div class="a cell" style="left:481px;top:632px;color:#000">6</div>
<div class="a cell" style="left:541px;top:632px;color:#000">34.884μs</div>
<div class="a cell" style="left:630px;top:632px;color:#000">0x5</div>
<div class="a cell" style="left:718px;top:632px;color:#000">Reg_Zero_Write</div>
<div class="a cell" style="left:874px;top:632px;color:#000">14.706 MHz</div>
<div class="a cell" style="left:963px;top:632px;color:#000">–</div>
<div class="a cell" style="left:1052px;top:632px;color:#000">0x0</div>
<svg class="a" style="left:1151px;top:633px" width="16" height="16" viewBox="0 0 16 16"><circle cx="8" cy="8" r="6.7" fill="none" stroke="#8a8a8a" stroke-width="1.1"/><path d="M5 6.8l3 3 3-3" fill="none" stroke="#555" stroke-width="1.6"/></svg>
<div class="a cell" style="left:1170px;top:632px;color:#000">Data – 1</div>
<div class="a cell" style="left:1242px;top:632px;color:#000">Pass</div>
<div class="a cell" style="left:481px;top:654px;color:#000">7</div>
<div class="a cell" style="left:541px;top:654px;color:#000">13.881017s</div>
<div class="a cell" style="left:630px;top:654px;color:#000">0x5</div>
<div class="a cell" style="left:718px;top:654px;color:#000">Ext_Reg_Write</div>
<div class="a cell" style="left:874px;top:654px;color:#000">14.706 MHz</div>
<div class="a cell" style="left:963px;top:654px;color:#000">0x0</div>
<div class="a cell" style="left:1052px;top:654px;color:#000">0x25</div>
<svg class="a" style="left:1151px;top:655px" width="16" height="16" viewBox="0 0 16 16"><circle cx="8" cy="8" r="6.7" fill="none" stroke="#8a8a8a" stroke-width="1.1"/><path d="M5 6.8l3 3 3-3" fill="none" stroke="#555" stroke-width="1.6"/></svg>
<div class="a cell" style="left:1170px;top:654px;color:#000">Data – 1</div>
<div class="a cell" style="left:1242px;top:654px;color:#000">Pass</div>
<div class="a cell" style="left:481px;top:676px;color:#000">8</div>
<div class="a cell" style="left:541px;top:676px;color:#000">13.881019s</div>
<div class="a cell" style="left:630px;top:676px;color:#000">0x5</div>
<div class="a cell" style="left:718px;top:676px;color:#000">Ext_Reg_Write</div>
<div class="a cell" style="left:874px;top:676px;color:#000">14.706 MHz</div>
<div class="a cell" style="left:963px;top:676px;color:#000">0x0</div>
<div class="a cell" style="left:1052px;top:676px;color:#000">0x27</div>
<svg class="a" style="left:1151px;top:677px" width="16" height="16" viewBox="0 0 16 16"><circle cx="8" cy="8" r="6.7" fill="none" stroke="#8a8a8a" stroke-width="1.1"/><path d="M5 6.8l3 3 3-3" fill="none" stroke="#555" stroke-width="1.6"/></svg>
<div class="a cell" style="left:1170px;top:676px;color:#000">Data – 1</div>
<div class="a cell" style="left:1242px;top:676px;color:#000">Pass</div>
<div class="a cell" style="left:481px;top:698px;color:#000">9</div>
<div class="a cell" style="left:541px;top:698px;color:#000">38.096707s</div>
<div class="a cell" style="left:630px;top:698px;color:#000">0x5</div>
<div class="a cell" style="left:718px;top:698px;color:#000">Int_Summary_Ident</div>
<div class="a cell" style="left:874px;top:698px;color:#000">14.706 MHz</div>
<div class="a cell" style="left:963px;top:698px;color:#000">–</div>
<div class="a cell" style="left:1052px;top:698px;color:#000">0x0</div>
<div class="a cell" style="left:1242px;top:698px;color:#000">Pass</div>
<div class="a cell" style="left:481px;top:720px;color:#000">10</div>
<div class="a cell" style="left:541px;top:720px;color:#000">81.634330s</div>
<div class="a cell" style="left:630px;top:720px;color:#000">0x6</div>
<div class="a cell" style="left:718px;top:720px;color:#000">Reg_Write</div>
<div class="a cell" style="left:874px;top:720px;color:#000">14.706 MHz</div>
<div class="a cell" style="left:963px;top:720px;color:#000">–</div>
<div class="a cell" style="left:1052px;top:720px;color:#000">0x10</div>
<svg class="a" style="left:1151px;top:721px" width="16" height="16" viewBox="0 0 16 16"><circle cx="8" cy="8" r="6.7" fill="none" stroke="#8a8a8a" stroke-width="1.1"/><path d="M5 6.8l3 3 3-3" fill="none" stroke="#555" stroke-width="1.6"/></svg>
<div class="a cell" style="left:1170px;top:720px;color:#000">Data – 1</div>
<div class="a cell" style="left:1242px;top:720px;color:#f01818">Error</div>
<div class="a" style="left:1343px;top:498px;width:17px;height:242px;background:#efefef"></div>
<div class="a" style="left:1343px;top:498px;width:17px;height:208px;background:#dadada"></div>
<div class="a" style="left:1343px;top:723px;width:17px;height:17px;background:#dadada"></div>
<svg class="a" style="left:1347px;top:503px" width="9" height="10" viewBox="0 0 9 10"><path d="M4.5 1.5v8.5M1 5l3.5-3.5L8 5" fill="none" stroke="#8a8a8a" stroke-width="1.3"/></svg>
<svg class="a" style="left:1347px;top:727px" width="9" height="10" viewBox="0 0 9 10"><path d="M4.5 0.5v8M1 5l3.5 3.5L8 5" fill="none" stroke="#8a8a8a" stroke-width="1.3"/></svg>

<svg class="a" style="left:435px;top:113px" width="9" height="5" viewBox="0 0 9 5"><path d="M0 0h9L4.5 4.5z" fill="#e8e8e8"/></svg><svg class="a" style="left:450px;top:111px" width="8" height="11" viewBox="0 0 8 11" shape-rendering="crispEdges"><rect x="5" y="0" width="1" height="6" fill="#e8e8e8"/><rect x="2" y="0" width="4" height="1" fill="#e8e8e8"/><rect x="0" y="6" width="8" height="1" fill="#e8e8e8"/><rect x="3.5" y="7" width="1" height="4" fill="#e8e8e8"/><rect x="2" y="0" width="1.5" height="6" fill="#e8e8e8"/></svg><svg class="a" style="left:1333px;top:113px" width="9" height="5" viewBox="0 0 9 5"><path d="M0 0h9L4.5 4.5z" fill="#e8e8e8"/></svg><svg class="a" style="left:1348px;top:111px" width="8" height="11" viewBox="0 0 8 11" shape-rendering="crispEdges"><rect x="5" y="0" width="1" height="6" fill="#e8e8e8"/><rect x="2" y="0" width="4" height="1" fill="#e8e8e8"/><rect x="0" y="6" width="8" height="1" fill="#e8e8e8"/><rect x="3.5" y="7" width="1" height="4" fill="#e8e8e8"/><rect x="2" y="0" width="1.5" height="6" fill="#e8e8e8"/></svg><svg class="a" style="left:435px;top:435px" width="9" height="5" viewBox="0 0 9 5"><path d="M0 0h9L4.5 4.5z" fill="#6b5a3a"/></svg><svg class="a" style="left:450px;top:433px" width="8" height="11" viewBox="0 0 8 11" shape-rendering="crispEdges"><rect x="5" y="0" width="1" height="6" fill="#6b5a3a"/><rect x="2" y="0" width="4" height="1" fill="#6b5a3a"/><rect x="0" y="6" width="8" height="1" fill="#6b5a3a"/><rect x="3.5" y="7" width="1" height="4" fill="#6b5a3a"/><rect x="2" y="0" width="1.5" height="6" fill="#6b5a3a"/></svg><svg class="a" style="left:1333px;top:435px" width="9" height="5" viewBox="0 0 9 5"><path d="M0 0h9L4.5 4.5z" fill="#e8e8e8"/></svg><svg class="a" style="left:1348px;top:433px" width="8" height="11" viewBox="0 0 8 11" shape-rendering="crispEdges"><rect x="5" y="0" width="1" height="6" fill="#e8e8e8"/><rect x="2" y="0" width="4" height="1" fill="#e8e8e8"/><rect x="0" y="6" width="8" height="1" fill="#e8e8e8"/><rect x="3.5" y="7" width="1" height="4" fill="#e8e8e8"/><rect x="2" y="0" width="1.5" height="6" fill="#e8e8e8"/></svg>
<div id="status" class="a"></div>
<div id="taskb" class="a"></div>
<div class="a" style="left:1288px;top:750px;font-weight:bold;font-size:12px;letter-spacing:-0.25px;color:#000">Version: 0.8.0</div>
<div class="a" style="left:16px;top:767px;width:44px;height:1px;background:#b8ccd8;border-left:1px solid #3c6470;border-right:1px solid #3c6470"></div>
<div class="a" style="left:430px;top:767px;width:43px;height:1px;background:#b8ccd8"></div>
<div class="a" style="left:476px;top:767px;width:44px;height:1px;background:#b8ccd8"></div>
<div class="a" style="left:522px;top:767px;width:44px;height:1px;background:#e8f0f4"></div>
</body></html>
